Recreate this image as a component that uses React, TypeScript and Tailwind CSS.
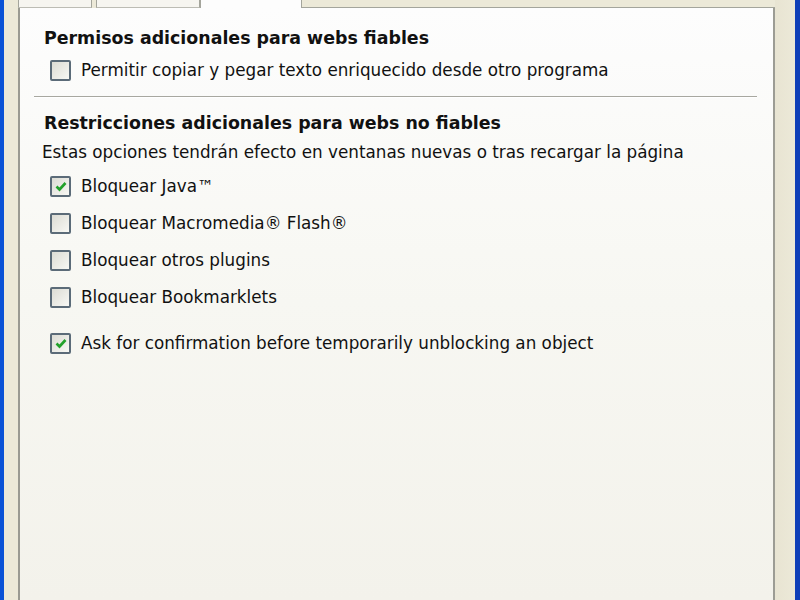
import React from "react";

const font = { fontFamily: '"DejaVu Sans", Verdana, sans-serif' };

function Check({ checked }: { checked?: boolean }) {
  return (
    <span className="w-[21px] h-[21px] shrink-0 border-2 border-[#5b6b78] rounded-[2px] bg-gradient-to-br from-[#dcdcd4] to-[#f8f8f4] flex items-center justify-center">
      {checked && (
        <svg width="14" height="14" viewBox="0 0 14 14">
          <path d="M2.5 6.5 L5.5 9.5 L11.5 3" fill="none" stroke="#22a12a" strokeWidth="2.6" />
        </svg>
      )}
    </span>
  );
}

function Option({ label, checked }: { label: string; checked?: boolean }) {
  return (
    <div className="flex items-center gap-[10px] h-[21px]">
      <Check checked={checked} />
      <span>{label}</span>
    </div>
  );
}

export default function App() {
  return (
    <div className="w-[800px] h-[600px] flex bg-[#ece9d8] overflow-hidden text-[#111] text-[16.8px]" style={font}>
      {/* window frame left */}
      <div className="w-[4px] bg-[#0a52d6]" />
      <div className="w-[14px] bg-[#ece9d8]" />
      <div className="flex flex-col w-[757px]">
        {/* tab strip, cut off */}
        <div className="h-[8px] flex items-end">
          <div className="w-[74px] h-full bg-[#f6f5f0] border-x border-[#a4a59c] border-b border-b-[#bcbcb4]" />
          <div className="w-[4px] h-full" />
          <div className="w-[104px] h-full bg-[#f6f5f0] border-x border-[#a4a59c] border-b border-b-[#bcbcb4]" />
          <div className="w-[102px] h-full bg-[#fdfdfd] border-x border-[#a4a59c]" />
          <div className="flex-1 h-full border-b border-[#a4a59c]" />
        </div>
        {/* tab page */}
        <div className="flex-1 border-x-2 border-l-[#9a9a92] border-r-[#9c9c94] bg-gradient-to-b from-[#fdfdfd] via-[#f7f7f2] to-[#f3f2eb] px-[24px] pt-[19px]">
          <div className="font-bold text-[17.4px] leading-[22px]">Permisos adicionales para webs fiables</div>
          <div className="mt-[11px] pl-[6px]">
            <Option label="Permitir copiar y pegar texto enriquecido desde otro programa" />
          </div>
          <div className="mt-[15px] ml-[-10px] mr-[-8px] h-[2px] border-t border-[#a8a8a0] border-b border-b-white" />
          <div className="mt-[14px] font-bold text-[17.4px] leading-[22px]">Restricciones adicionales para webs no fiables</div>
          <div className="mt-[7px] -ml-[2px] leading-[22px]">Estas opciones tendrán efecto en ventanas nuevas o tras recargar la página</div>
          <div className="mt-[13px] pl-[6px] flex flex-col gap-[16px]">
            <Option label="Bloquear Java™" checked />
            <Option label="Bloquear Macromedia® Flash®" />
            <Option label="Bloquear otros plugins" />
            <Option label="Bloquear Bookmarklets" />
          </div>
          <div className="mt-[25px] pl-[6px]">
            <Option label="Ask for confirmation before temporarily unblocking an object" checked />
          </div>
        </div>
      </div>
      <div className="flex-1 bg-gradient-to-r from-[#e8e4d2] to-[#ece9d8]" />
      <div className="w-[5px] bg-[#0f3fb8]" />
    </div>
  );
}
